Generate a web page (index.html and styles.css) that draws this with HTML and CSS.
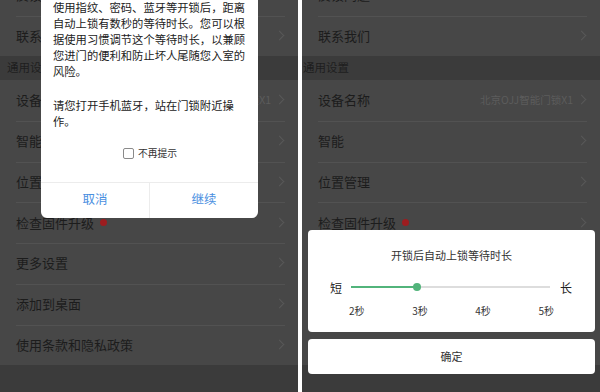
FILE: index.html
```html
<html lang="zh-CN">
<head>
    <title>门锁设置</title>
    <meta charset="utf-8">
    <link rel="stylesheet" href="styles.css">
</head>

<body>
    <div class="shot">
        <!-- left: bluetooth dialog over the settings list -->
        <div class="phone phone-left">
            <ul class="list list-top">
                <li class="row">反馈问题</li>
                <li class="row">联系我们<span class="chev"></span></li>
            </ul>
            <div class="section section-left">通用设置</div>
            <ul class="list">
                <li class="row">设备名称<span class="value">北京OJJ智能门锁X1</span><span class="chev"></span></li>
                <li class="row">智能<span class="chev"></span></li>
                <li class="row">位置管理<span class="chev"></span></li>
                <li class="row">检查固件升级<span class="dot"></span><span class="chev"></span></li>
                <li class="row">更多设置<span class="chev"></span></li>
                <li class="row">添加到桌面<span class="chev"></span></li>
                <li class="row">使用条款和隐私政策<span class="chev"></span></li>
            </ul>

            <div class="dialog">
                <div class="dialog-body">
                    <p>使用指纹、密码、蓝牙等开锁后，距离自动上锁有数秒的等待时长。您可以根据使用习惯调节这个等待时长，以兼顾您进门的便利和防止坏人尾随您入室的风险。</p>
                    <p>请您打开手机蓝牙，站在门锁附近操作。</p>
                    <label class="check"><span class="box"></span>不再提示</label>
                </div>
                <div class="dialog-btns">
                    <div class="btn">取消</div>
                    <div class="btn">继续</div>
                </div>
            </div>
        </div>

        <!-- right: auto-lock delay sheet -->
        <div class="phone phone-right">
            <ul class="list list-top">
                <li class="row">反馈问题</li>
                <li class="row">联系我们<span class="chev"></span></li>
            </ul>
            <div class="section section-right">通用设置</div>
            <ul class="list">
                <li class="row">设备名称<span class="value">北京OJJ智能门锁X1</span><span class="chev"></span></li>
                <li class="row">智能<span class="chev"></span></li>
                <li class="row">位置管理<span class="chev"></span></li>
                <li class="row">检查固件升级<span class="dot"></span><span class="chev"></span></li>
                <li class="row">更多设置<span class="chev"></span></li>
                <li class="row">添加到桌面<span class="chev"></span></li>
                <li class="row">使用条款和隐私政策<span class="chev"></span></li>
            </ul>

            <div class="sheet">
                <div class="card">
                    <div class="card-title">开锁后自动上锁等待时长</div>
                    <div class="slider">
                        <span class="end">短</span>
                        <div class="track">
                            <div class="fill" style="width: 33.3%"></div>
                            <div class="thumb" style="left: 33.3%"></div>
                        </div>
                        <span class="end">长</span>
                    </div>
                    <div class="ticks">
                        <span>2秒</span>
                        <span>3秒</span>
                        <span>4秒</span>
                        <span>5秒</span>
                    </div>
                </div>
                <div class="card card-ok">确定</div>
            </div>
        </div>
    </div>
</body>

</html>
```

FILE: styles.css
```css
body {
    margin: 0;
    padding: 0;
    background-color: #ffffff;
    font-family: "Noto Sans CJK SC", "Noto Sans", sans-serif;
}

.shot {
    display: flex;
    gap: 4px;
    width: 600px;
    height: 392px;
}

.phone {
    position: relative;
    width: 298px;
    height: 392px;
    overflow: hidden;
    background-color: #3b3b3b;
}

.list {
    list-style: none;
    margin: 0;
    padding: 0;
    background-color: #474747;
}

.list-top {
    margin-top: -25px;
}

.row {
    display: flex;
    align-items: center;
    height: 40.7px;
    box-sizing: border-box;
    margin: 0 13px 0 16px;
    padding-bottom: 2px;
    font-size: 13px;
    color: #1c1c1c;
    border-top: 1px solid #525252;
}

.row:first-child {
    border-top: none;
}

.value {
    margin-left: auto;
    margin-right: 5px;
    font-size: 10.5px;
    color: #5c5c5c;
}

.chev {
    width: 6px;
    height: 6px;
    margin-left: auto;
    margin-right: 2px;
    border-top: 1px solid #585858;
    border-right: 1px solid #585858;
    transform: rotate(45deg);
}

.value + .chev {
    margin-left: 0;
}

.dot {
    width: 7px;
    height: 7px;
    margin-left: 6px;
    border-radius: 50%;
    background-color: #9c1c1f;
}

.section {
    height: 24px;
    line-height: 22px;
    font-size: 11.5px;
    color: #1e1e1e;
}

.section-left {
    padding-left: 7px;
}

.section-right {
    padding-left: 1px;
}

/* dialog */

.dialog {
    position: absolute;
    top: -8px;
    left: 41px;
    width: 217px;
    background-color: #ffffff;
    border-radius: 6px;
}

.dialog-body {
    padding: 7px 11px 0 12px;
    font-size: 11.3px;
    line-height: 16px;
    color: #222222;
}

.dialog-body p {
    margin: 0;
}

.dialog-body p + p {
    margin-top: 18px;
}

.check {
    display: flex;
    align-items: center;
    justify-content: center;
    gap: 4px;
    height: 16px;
    margin: 16px 0 21px;
    font-size: 9.8px;
    color: #333333;
}

.box {
    width: 9px;
    height: 9px;
    border: 1px solid #8a8a8a;
    border-radius: 2px;
}

.dialog-btns {
    display: flex;
    border-top: 1px solid #ececec;
}

.btn {
    flex: 1;
    height: 35px;
    line-height: 32px;
    text-align: center;
    font-size: 12.5px;
    color: #4a8fdf;
}

.btn + .btn {
    border-left: 1px solid #ececec;
}

/* bottom sheet */

.sheet {
    position: absolute;
    left: 6px;
    right: 5px;
    bottom: 18px;
    display: flex;
    flex-direction: column;
    gap: 7px;
}

.card {
    background-color: #ffffff;
    border-radius: 4px;
}

.card-title {
    margin-top: 17px;
    line-height: 16px;
    text-align: center;
    font-size: 11px;
    color: #333333;
}

.slider {
    display: flex;
    align-items: center;
    height: 16px;
    margin: 16px 23px 0 22px;
}

.end {
    font-size: 12px;
    color: #222222;
}

.track {
    position: relative;
    flex: 1;
    height: 2px;
    margin: 0 10px 0 9px;
    background-color: #dddddd;
}

.fill {
    height: 2px;
    background-color: #52b47b;
}

.thumb {
    position: absolute;
    top: -3px;
    width: 8px;
    height: 8px;
    margin-left: -4px;
    border-radius: 50%;
    background-color: #52b47b;
}

.ticks {
    display: flex;
    justify-content: space-between;
    margin: 8px 41px 13px;
    line-height: 16px;
    font-size: 10px;
    color: #333333;
}

.card-ok {
    height: 35px;
    line-height: 35px;
    text-align: center;
    font-size: 11px;
    color: #333333;
}
```
